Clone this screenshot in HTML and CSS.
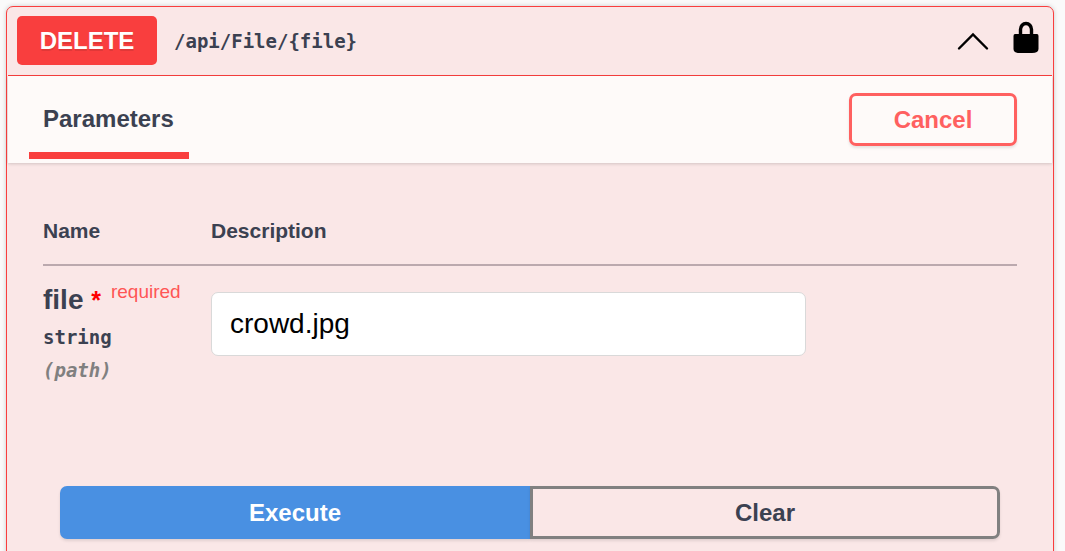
FILE: index.html
```html
<!DOCTYPE html>
<html lang="en">
<head>
<meta charset="utf-8">
<meta name="viewport" content="width=device-width, initial-scale=1">
<title>DELETE /api/File/{file}</title>
<link rel="stylesheet" href="styles.css">
</head>
<body>
<main class="operation">
  <header class="summary">
    <span class="method">DELETE</span>
    <span class="path">/api/File/{file}</span>
    <button class="icon-button" type="button" aria-label="Collapse operation">
      <svg class="chevron" viewBox="0 0 32 20" aria-hidden="true"><path d="M2 17.500 16 3.500 30 17.500" fill="none" stroke="#000" stroke-width="2.4" stroke-linecap="round"/></svg>
    </button>
    <button class="icon-button" type="button" aria-label="Authorization">
      <svg class="lock" viewBox="0 0 26 34" aria-hidden="true"><path d="M7.500 14V8.500a5.500 6 0 0 1 11 0V14" fill="none" stroke="#000" stroke-width="3.4"/><path d="M2 13H24Q25.500 13 25.500 15V28Q25.500 32 19 32H7Q.5 32 .5 28V15Q.5 13 2 13Z"/></svg>
    </button>
  </header>
  <div class="section-header">
    <h2 class="tab">Parameters</h2>
    <button class="button cancel" type="button">Cancel</button>
  </div>
  <div class="table-container">
    <table class="parameters">
      <thead>
        <tr><th class="name-column">Name</th><th>Description</th></tr>
      </thead>
      <tbody>
        <tr>
          <td>
            <label class="parameter-name" for="file">file <span class="star">*</span><span class="required">required</span></label>
            <div class="parameter-type">string</div>
            <div class="parameter-in">(path)</div>
          </td>
          <td><input class="value" id="file" type="text" value="crowd.jpg"></td>
        </tr>
      </tbody>
    </table>
  </div>
  <div class="actions">
    <button class="button execute" type="button">Execute</button>
    <button class="button clear" type="button">Clear</button>
  </div>
</main>
</body>
</html>
```
FILE: styles.css
```css
* {
  box-sizing: border-box;
}

body {
  margin: 0;
  padding: 6px 11px 0 6px;
  background: #fafafa;
  color: #3b4151;
  font-family: "Liberation Sans", Arial, sans-serif;
  overflow: hidden;
}

.operation {
  border: 1px solid #f93e3e;
  border-radius: 7px;
  background: #fae7e7;
  box-shadow: 0 0 5px rgba(0, 0, 0, 0.19);
  padding: 0 1px 36px;
}

.summary {
  display: flex;
  align-items: center;
  padding: 9px 13px 10px 9px;
  border-bottom: 1px solid #f93e3e;
}

.method {
  width: 140px;
  border-radius: 5px;
  background: #f93e3e;
  color: #fff;
  font-size: 24px;
  font-weight: bold;
  line-height: 49px;
  text-align: center;
  text-shadow: 0 2px 0 rgba(0, 0, 0, 0.1);
}

.path {
  flex: 1;
  padding-left: 17px;
  font-family: "DejaVu Sans Mono", monospace;
  font-size: 19px;
  font-weight: bold;
}

.icon-button {
  display: flex;
  margin: 0 0 0 24px;
  padding: 0;
  border: 0;
  background: none;
}

.chevron {
  width: 32px;
  height: 20px;
}

.lock {
  width: 26px;
  height: 34px;
  margin-bottom: 6px;
}

.section-header {
  display: flex;
  align-items: center;
  justify-content: space-between;
  padding: 0 35px 0 21px;
  background: #fefaf9;
  box-shadow: 0 1px 3px rgba(0, 0, 0, 0.16);
}

.tab {
  margin: 0 0 4px;
  padding: 10px 15px 0 14px;
  border-bottom: 7px solid #f93e3e;
  font-size: 24px;
  line-height: 66px;
}

.button {
  height: 53px;
  padding: 0 41px;
  border: 3px solid #808080;
  border-radius: 7px;
  background: transparent;
  box-shadow: 0 2px 3px rgba(0, 0, 0, 0.1);
  color: #3b4151;
  font-family: inherit;
  font-size: 24px;
  font-weight: bold;
}

.cancel {
  width: 168px;
  border-color: #ff6060;
  color: #ff6060;
}

.table-container {
  padding: 36px 35px;
}

.parameters {
  width: 100%;
  border-collapse: collapse;
}

.parameters th {
  padding: 19px 0 21px;
  border-bottom: 2px solid #bba9ae;
  font-size: 21px;
  line-height: 25px;
  text-align: left;
}

.name-column {
  width: 168px;
}

.parameters td {
  padding: 18px 0 0;
  vertical-align: top;
}

.parameter-name {
  display: flex;
  align-items: flex-start;
  font-size: 28px;
  font-weight: bold;
  line-height: 32px;
  white-space: pre;
}

.star {
  color: #f00;
  font-size: 25px;
}

.required {
  padding-left: 10px;
  color: #ff5555;
  font-size: 19px;
  font-weight: normal;
  line-height: 16px;
}

.parameter-type,
.parameter-in {
  padding-top: 9px;
  font-family: "DejaVu Sans Mono", monospace;
  font-size: 19px;
  font-weight: bold;
  line-height: 24px;
}

.parameter-in {
  color: #808080;
  font-style: italic;
}

.value {
  display: block;
  width: 100%;
  max-width: 595px;
  height: 64px;
  margin-top: 8px;
  padding: 0 18px;
  border: 1px solid #d9d9d9;
  border-radius: 7px;
  background: #fff;
  color: #000;
  font-family: inherit;
  font-size: 28px;
}

.actions {
  display: flex;
  padding: 68px 52px 0;
}

.actions .button {
  flex: 1;
}

.execute {
  border-color: #4990e2;
  border-radius: 7px 0 0 7px;
  background: #4990e2;
  color: #fff;
}

.clear {
  border-radius: 0 7px 7px 0;
}
```
